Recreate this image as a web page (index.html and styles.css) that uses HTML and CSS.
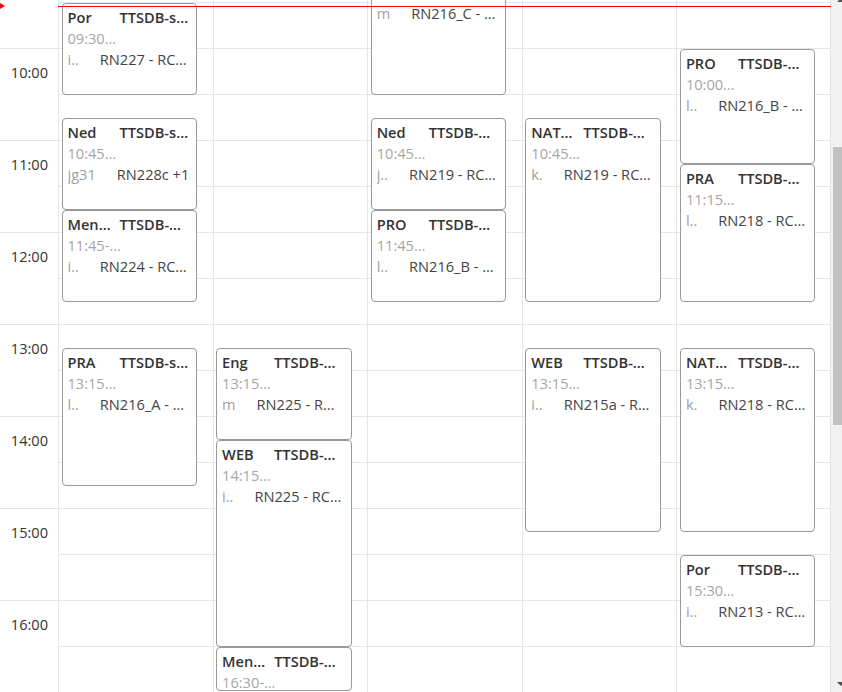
FILE: index.html
```html
<!DOCTYPE html>
<html>
<head>
<meta charset="utf-8">
<link rel="stylesheet" href="styles.css">
</head>
<body>
<div class="calendar">
  <div class="viewport">
    <div class="content">
      <div class="slots">
        <div class="slot hour"><div class="axis"></div><div class="lane"></div></div>
        <div class="slot"><div class="axis"></div><div class="lane"></div></div>
        <div class="slot hour"><div class="axis"><span>10:00</span></div><div class="lane"></div></div>
        <div class="slot"><div class="axis"></div><div class="lane"></div></div>
        <div class="slot hour"><div class="axis"><span>11:00</span></div><div class="lane"></div></div>
        <div class="slot"><div class="axis"></div><div class="lane"></div></div>
        <div class="slot hour"><div class="axis"><span>12:00</span></div><div class="lane"></div></div>
        <div class="slot"><div class="axis"></div><div class="lane"></div></div>
        <div class="slot hour"><div class="axis"><span>13:00</span></div><div class="lane"></div></div>
        <div class="slot"><div class="axis"></div><div class="lane"></div></div>
        <div class="slot hour"><div class="axis"><span>14:00</span></div><div class="lane"></div></div>
        <div class="slot"><div class="axis"></div><div class="lane"></div></div>
        <div class="slot hour"><div class="axis"><span>15:00</span></div><div class="lane"></div></div>
        <div class="slot"><div class="axis"></div><div class="lane"></div></div>
        <div class="slot hour"><div class="axis"><span>16:00</span></div><div class="lane"></div></div>
        <div class="slot"><div class="axis"></div><div class="lane"></div></div>
      </div>

      <div class="cols">
        <div class="axis-col">
          <div class="now-arrow" style="top:47px"></div>
        </div>

        <div class="col">
          <div class="event" style="top:47px;height:92px">
            <div class="row title"><span class="a">Por</span><span class="b">TTSDB-s…</span></div>
            <div class="row time">09:30…</div>
            <div class="row info"><span class="a">i..</span><span class="b">RN227 - RC…</span></div>
          </div>
          <div class="event" style="top:162px;height:92px">
            <div class="row title"><span class="a">Ned</span><span class="b">TTSDB-s…</span></div>
            <div class="row time">10:45…</div>
            <div class="row info"><span class="a">jg31</span><span class="b">RN228c +1</span></div>
          </div>
          <div class="event" style="top:254px;height:92px">
            <div class="row title"><span class="a">Men…</span><span class="b">TTSDB-…</span></div>
            <div class="row time">11:45-…</div>
            <div class="row info"><span class="a">i..</span><span class="b">RN224 - RC…</span></div>
          </div>
          <div class="event" style="top:392px;height:138px">
            <div class="row title"><span class="a">PRA</span><span class="b">TTSDB-s…</span></div>
            <div class="row time">13:15…</div>
            <div class="row info"><span class="a">l..</span><span class="b">RN216_A - …</span></div>
          </div>
        </div>

        <div class="col">
          <div class="event" style="top:392px;height:92px">
            <div class="row title"><span class="a">Eng</span><span class="b">TTSDB-…</span></div>
            <div class="row time">13:15…</div>
            <div class="row info"><span class="a">m</span><span class="b">RN225 - R…</span></div>
          </div>
          <div class="event" style="top:484px;height:207px">
            <div class="row title"><span class="a">WEB</span><span class="b">TTSDB-…</span></div>
            <div class="row time">14:15…</div>
            <div class="row info"><span class="a">i..</span><span class="b">RN225 - RC…</span></div>
          </div>
          <div class="event" style="top:691px;height:44px">
            <div class="row title"><span class="a">Men…</span><span class="b">TTSDB-…</span></div>
            <div class="row time">16:30-…</div>
          </div>
        </div>

        <div class="col">
          <div class="event" style="top:1px;height:138px">
            <div class="row title"><span class="a">Ned</span><span class="b">TTSDB-…</span></div>
            <div class="row time">09:00…</div>
            <div class="row info"><span class="a">m</span><span class="b">RN216_C - …</span></div>
          </div>
          <div class="event" style="top:162px;height:92px">
            <div class="row title"><span class="a">Ned</span><span class="b">TTSDB-…</span></div>
            <div class="row time">10:45…</div>
            <div class="row info"><span class="a">j..</span><span class="b">RN219 - RC…</span></div>
          </div>
          <div class="event" style="top:254px;height:92px">
            <div class="row title"><span class="a">PRO</span><span class="b">TTSDB-…</span></div>
            <div class="row time">11:45…</div>
            <div class="row info"><span class="a">l..</span><span class="b">RN216_B - …</span></div>
          </div>
        </div>

        <div class="col">
          <div class="event" style="top:162px;height:184px">
            <div class="row title"><span class="a">NAT…</span><span class="b">TTSDB-…</span></div>
            <div class="row time">10:45…</div>
            <div class="row info"><span class="a">k.</span><span class="b">RN219 - RC…</span></div>
          </div>
          <div class="event" style="top:392px;height:184px">
            <div class="row title"><span class="a">WEB</span><span class="b">TTSDB-…</span></div>
            <div class="row time">13:15…</div>
            <div class="row info"><span class="a">i..</span><span class="b">RN215a - R…</span></div>
          </div>
        </div>

        <div class="col last">
          <div class="event" style="top:93px;height:115px">
            <div class="row title"><span class="a">PRO</span><span class="b">TTSDB-…</span></div>
            <div class="row time">10:00…</div>
            <div class="row info"><span class="a">l..</span><span class="b">RN216_B - …</span></div>
          </div>
          <div class="event" style="top:208px;height:138px">
            <div class="row title"><span class="a">PRA</span><span class="b">TTSDB-…</span></div>
            <div class="row time">11:15…</div>
            <div class="row info"><span class="a">l..</span><span class="b">RN218 - RC…</span></div>
          </div>
          <div class="event" style="top:392px;height:184px">
            <div class="row title"><span class="a">NAT…</span><span class="b">TTSDB-…</span></div>
            <div class="row time">13:15…</div>
            <div class="row info"><span class="a">k.</span><span class="b">RN218 - RC…</span></div>
          </div>
          <div class="event" style="top:599px;height:92px">
            <div class="row title"><span class="a">Por</span><span class="b">TTSDB-…</span></div>
            <div class="row time">15:30…</div>
            <div class="row info"><span class="a">i..</span><span class="b">RN213 - RC…</span></div>
          </div>
        </div>

        <div class="now-line" style="top:50px"></div>
      </div>
    </div>
  </div>
  <div class="scrollbar">
    <div class="sb-up"></div>
    <div class="sb-thumb"></div>
    <div class="sb-down"></div>
  </div>
</div>
</body>
</html>
```
FILE: styles.css
```css
* { box-sizing: border-box; }
html, body { margin: 0; padding: 0; background: #fff; }
body {
  font-family: "Open Sans", "Noto Sans", sans-serif;
  font-size: 14.6px;
  color: #333;
}
.calendar {
  display: flex;
  width: 842px;
  height: 692px;
  overflow: hidden;
}
.viewport {
  position: relative;
  width: 831px;
  height: 692px;
  overflow: hidden;
}
.content {
  position: relative;
  margin-top: -44px;
}
.slots { display: flex; flex-direction: column; }
.slot {
  display: flex;
  height: 46px;
}
.slot .axis {
  width: 58px;
  flex: 0 0 58px;
  border-top: 1px solid transparent;
  display: flex;
  align-items: center;
  justify-content: flex-end;
  padding-right: 10px;
  color: #333;
}
.slot .lane {
  flex: 1;
  border-top: 1px solid #e6e6e6;
}
.slot.hour .axis { border-top-color: #e6e6e6; }

.cols {
  position: absolute;
  top: 0;
  left: 0;
  right: 0;
  bottom: 0;
  display: grid;
  grid-template-columns: 58px repeat(5, 1fr);
}
.axis-col { position: relative; }
.col {
  position: relative;
  border-left: 1px solid #e6e6e6;
}
.col.last { border-right: 1px solid #e6e6e6; }

.event {
  position: absolute;
  left: 2.5px;
  right: 15.5px;
  background: #fff;
  border: 1px solid #9a9a9a;
  border-radius: 4px;
  padding: 3px 5px 0 5px;
  overflow: hidden;
  line-height: 21px;
  white-space: nowrap;
}
.row { display: flex; overflow: hidden; }
.row .a, .row .b { white-space: nowrap; flex: 0 0 auto; }
.title { font-weight: 600; color: #333; }
.title .a { min-width: 52px; padding-right: 9px; }
.time { color: #a6a6a6; }
.info .a { min-width: 31px; padding-right: 21px; color: #a0a0a0; }
.info .b { color: #444; }

.now-line {
  position: absolute;
  left: 58px;
  right: 0;
  height: 1px;
  background: #ff0000;
  z-index: 3;
}
.now-arrow {
  position: absolute;
  left: 0;
  width: 0;
  height: 0;
  border-style: solid;
  border-width: 3px 0 3px 5px;
  border-color: transparent transparent transparent #ff0000;
}

.scrollbar {
  position: relative;
  width: 11px;
  height: 692px;
  background: #f1f1f1;
  overflow: hidden;
}
.sb-thumb {
  position: absolute;
  top: 147px;
  left: 2px;
  right: 0;
  height: 278px;
  background: #c1c1c1;
}
.sb-up, .sb-down {
  position: absolute;
  left: 6px;
  width: 0;
  height: 0;
  border-style: solid;
}
.sb-up {
  top: -2px;
  border-width: 0 4px 4px 4px;
  border-color: transparent transparent #505050 transparent;
}
.sb-down {
  top: 682px;
  border-width: 4px 4px 0 4px;
  border-color: #505050 transparent transparent transparent;
}
```
